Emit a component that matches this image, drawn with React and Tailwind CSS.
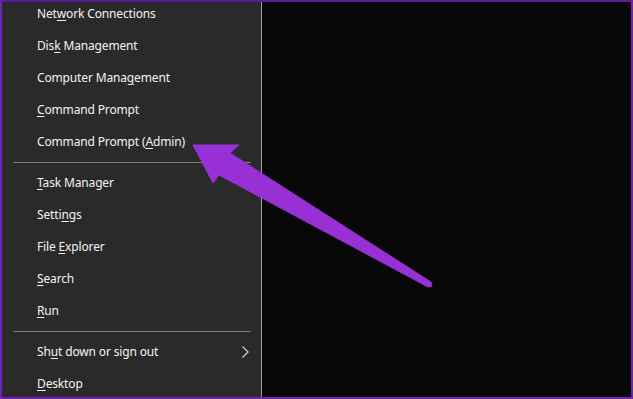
import React from "react";

const Item = ({ pre, key1, post, chevron }) => (
  <div className="h-8 flex items-center pl-[35px] pr-[11px] text-[12px] tracking-[-0.15px] text-[#f2f2f2] leading-none">
    <span className="flex-1 whitespace-nowrap">
      {pre}
      <span className="underline underline-offset-[2px] decoration-1">{key1}</span>
      {post}
    </span>
    {chevron && (
      <svg width="9" height="14" viewBox="0 0 9 14">
        <path d="M1.5 1.5 L7 7 L1.5 12.5" fill="none" stroke="#c8c8c8" strokeWidth="1.3" />
      </svg>
    )}
  </div>
);

const Sep = () => (
  <div className="h-[9px] flex items-center pl-[11px] pr-[10px]">
    <div className="h-px w-full bg-[#7d7d7d]" />
  </div>
);

export default function App() {
  return (
    <div
      className="relative w-[633px] h-[399px] overflow-hidden flex border-2 border-[#6d22b8] border-t-[#5b1c9c] bg-[#070707]"
      style={{ fontFamily: '"Noto Sans", "Open Sans", sans-serif' }}
    >
      <div className="w-[260px] h-full bg-[#2b2a2b] border-r border-[#a0a0a0] overflow-hidden">
        <div className="-mt-[4px]">
          <Item pre="Net" key1="w" post="ork Connections" />
          <Item pre="Dis" key1="k" post=" Management" />
          <Item pre="Computer Mana" key1="g" post="ement" />
          <Item pre="" key1="C" post="ommand Prompt" />
          <Item pre="Command Prompt (" key1="A" post="dmin)" />
          <Sep />
          <Item pre="" key1="T" post="ask Manager" />
          <Item pre="Setti" key1="n" post="gs" />
          <Item pre="File " key1="E" post="xplorer" />
          <Item pre="" key1="S" post="earch" />
          <Item pre="" key1="R" post="un" />
          <Sep />
          <Item pre="Sh" key1="u" post="t down or sign out" chevron />
          <Item pre="" key1="D" post="esktop" />
        </div>
      </div>
      <div className="flex-1 h-full bg-[#070707]" />
      <svg
        className="absolute left-[-2px] top-[-2px] pointer-events-none"
        width="633"
        height="399"
        viewBox="0 0 633 399"
      >
        <polygon
          points="193,145 239,145 230,153 431,282 432,286 428,287 219,175 213,183"
          fill="#9830d6"
          stroke="#9830d6"
          strokeWidth="1"
          strokeLinejoin="round"
        />
      </svg>
    </div>
  );
}
